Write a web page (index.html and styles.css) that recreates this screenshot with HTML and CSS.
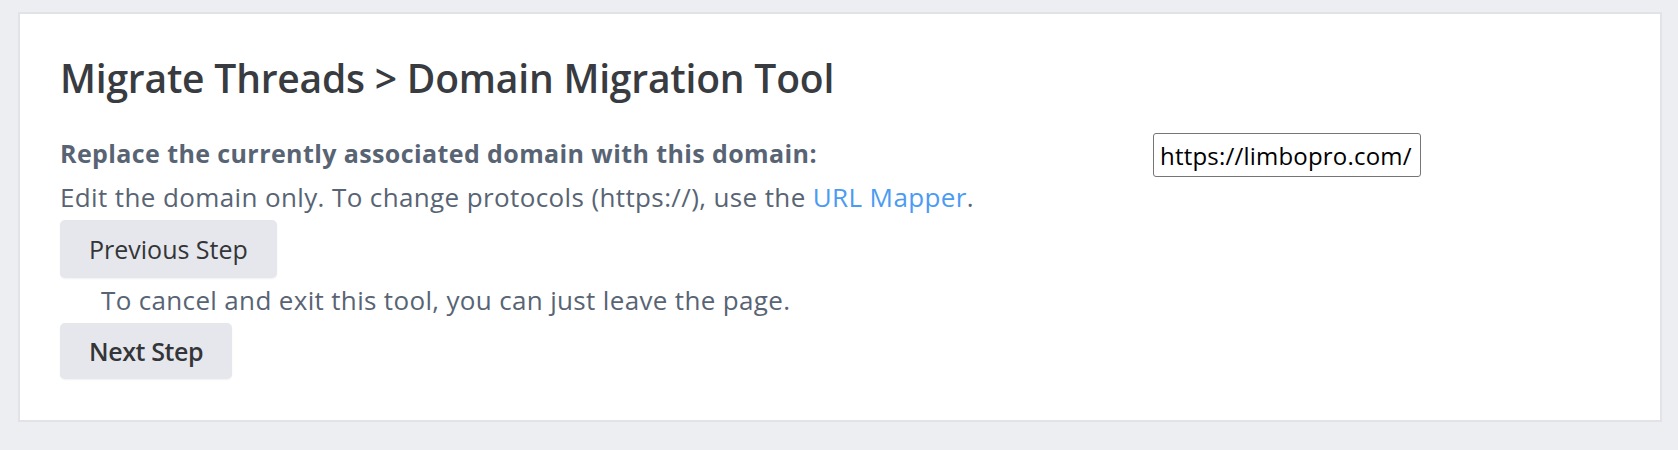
FILE: index.html
```html
<!DOCTYPE html>
<html lang="en">
<head>
<meta charset="utf-8">
<title>Domain Migration Tool</title>
<link rel="stylesheet" href="styles.css">
</head>
<body>
<div class="card">
  <h1 class="title">Migrate Threads &gt; Domain Migration Tool</h1>
  <div class="field-row">
    <label class="field-label" for="domain">Replace the currently associated domain with this domain:</label>
    <input class="field-input" id="domain" type="text" value="https://limbopro.com/">
  </div>
  <p class="hint">Edit the domain only. To change protocols (https://), use the <a class="link" href="#">URL Mapper</a>.</p>
  <button class="btn" type="button">Previous Step</button>
  <p class="cancel">To cancel and exit this tool, you can just leave the page.</p>
  <button class="btn btn-next" type="button">Next Step</button>
</div>
</body>
</html>
```

FILE: styles.css
```css
html, body {
  margin: 0;
  padding: 0;
  background: #edeef2;
  font-family: "Open Sans", Lato, sans-serif;
}

body {
  padding-top: 12px;
}

.card {
  margin: 0 16px 0 18px;
  background: #ffffff;
  border: 2px solid #e1e3e8;
  padding: 39px 40px 41px 40px;
  display: flex;
  flex-direction: column;
  align-items: flex-start;
}

.title {
  margin: 0;
  font-size: 39px;
  line-height: 50px;
  font-weight: 600;
  letter-spacing: -0.2px;
  color: #383b40;
}

.field-row {
  margin-top: 30px;
  display: flex;
  align-items: flex-start;
  width: 100%;
}

.field-label {
  flex: 0 0 1093px;
  font-size: 25px;
  line-height: 40px;
  font-weight: 700;
  letter-spacing: 0.4px;
  color: #586474;
}

.field-input {
  box-sizing: border-box;
  width: 268px;
  height: 44px;
  margin: 0;
  padding: 0 6px;
  border: 1px solid #767676;
  border-radius: 3px;
  font-family: "Open Sans", Lato, sans-serif;
  font-size: 24px;
  letter-spacing: 0.2px;
  color: #000000;
  background: #ffffff;
}

.hint {
  margin: 0;
  font-size: 26px;
  line-height: 40px;
  letter-spacing: 0.38px;
  color: #586474;
}

.link {
  color: #4b9bf3;
  text-decoration: none;
}

.btn {
  margin-top: 3px;
  padding: 12px 29px;
  font-family: "Open Sans", Lato, sans-serif;
  font-size: 25px;
  line-height: 34px;
  font-weight: 400;
  color: #333538;
  background: #e6e7ec;
  border: none;
  border-radius: 5px;
  box-shadow: 0 1px 2px rgba(0, 0, 0, 0.06);
}

.cancel {
  margin: 2px 0 0 0;
  padding-left: 41px;
  font-size: 26px;
  line-height: 40px;
  letter-spacing: 0.34px;
  color: #586474;
}

.btn-next {
  padding: 11px 29px;
  font-weight: 600;
  letter-spacing: -0.4px;
}
```
